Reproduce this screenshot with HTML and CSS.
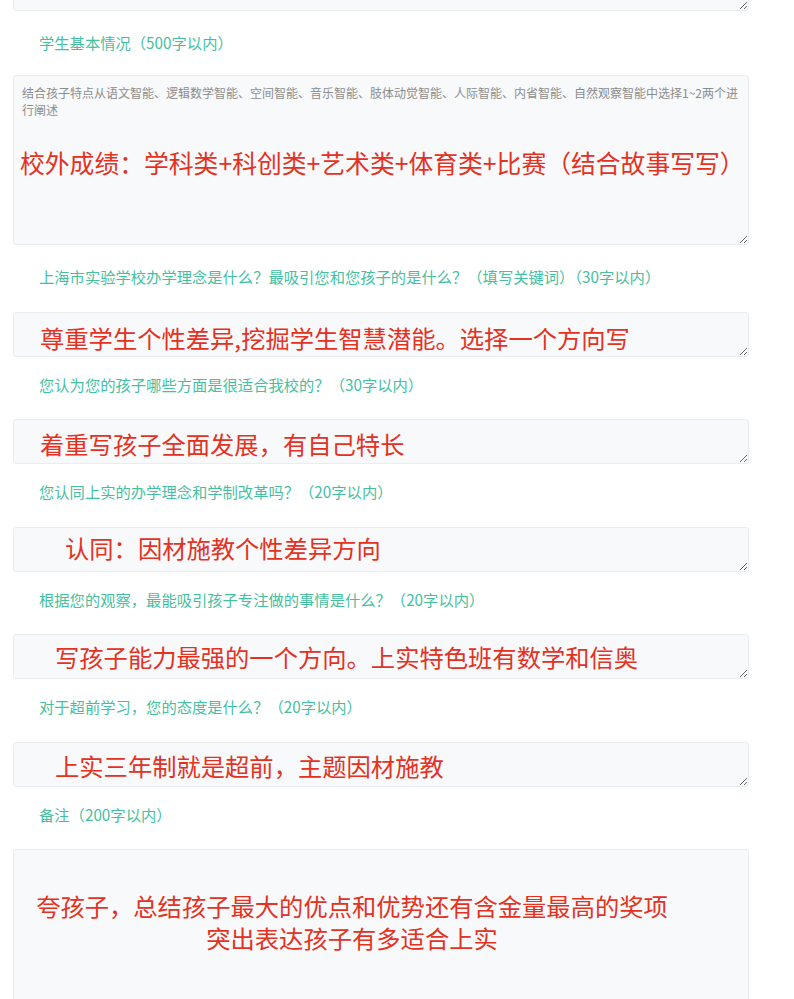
FILE: index.html
```html
<!DOCTYPE html>
<html lang="zh-CN">
<head>
<meta charset="utf-8">
<title>报名表</title>
<link rel="stylesheet" href="styles.css">
</head>
<body>
<div class="page">
  <div class="clip"><textarea class="box box-s" readonly></textarea></div>

  <div class="label">学生基本情况（500字以内）</div>
  <div class="field field-l">
    <textarea class="box box-l" readonly placeholder="结合孩子特点从语文智能、逻辑数学智能、空间智能、音乐智能、肢体动觉智能、人际智能、内省智能、自然观察智能中选择1~2两个进&#10;行阐述"></textarea>
    <div class="note n2">校外成绩：学科类+科创类+艺术类+体育类+比赛（结合故事写写）</div>
  </div>

  <div class="label">上海市实验学校办学理念是什么？最吸引您和您孩子的是什么？（填写关键词）（30字以内）</div>
  <div class="field">
    <textarea class="box box-s" readonly></textarea>
    <div class="note n3">尊重学生个性差异,挖掘学生智慧潜能。选择一个方向写</div>
  </div>

  <div class="label">您认为您的孩子哪些方面是很适合我校的？（30字以内）</div>
  <div class="field">
    <textarea class="box box-s" readonly></textarea>
    <div class="note n4">着重写孩子全面发展，有自己特长</div>
  </div>

  <div class="label">您认同上实的办学理念和学制改革吗？（20字以内）</div>
  <div class="field">
    <textarea class="box box-s" readonly></textarea>
    <div class="note n5">认同：因材施教个性差异方向</div>
  </div>

  <div class="label">根据您的观察，最能吸引孩子专注做的事情是什么？（20字以内）</div>
  <div class="field">
    <textarea class="box box-s" readonly></textarea>
    <div class="note n6">写孩子能力最强的一个方向。上实特色班有数学和信奥</div>
  </div>

  <div class="label">对于超前学习，您的态度是什么？（20字以内）</div>
  <div class="field">
    <textarea class="box box-s" readonly></textarea>
    <div class="note n7">上实三年制就是超前，主题因材施教</div>
  </div>

  <div class="label">备注（200字以内）</div>
  <div class="field field-l">
    <textarea class="box box-l" readonly></textarea>
    <div class="note n8">夸孩子，总结孩子最大的优点和优势还有含金量最高的奖项<br>突出表达孩子有多适合上实</div>
  </div>
</div>
</body>
</html>
```

FILE: styles.css
```css
html, body {
  margin: 0;
  padding: 0;
  background: #ffffff;
}

body {
  font-family: "Noto Sans CJK SC", "Noto Sans", sans-serif;
}

.page {
  display: flex;
  flex-direction: column;
  padding-bottom: 40px;
}

.clip {
  height: 11px;
  overflow: hidden;
  display: flex;
  align-items: flex-end;
}

.clip .box {
  margin-left: 13px;
  flex: none;
}

.field {
  position: relative;
  margin-left: 13px;
  width: 736px;
}

.box {
  display: block;
  box-sizing: border-box;
  width: 736px;
  margin: 0;
  border: 1px solid #e9edf0;
  border-radius: 3px;
  background: #f7f9fa;
  resize: vertical;
  outline: none;
  font-family: "Noto Sans CJK SC", "Noto Sans", sans-serif;
  font-size: 12px;
  line-height: 17px;
  color: #555;
  padding: 8px 4px 8px 8px;
}

.box::placeholder {
  color: #8c8c8c;
}

.box-s {
  height: 45px;
}

.box-l {
  height: 170px;
}

.label {
  margin: 21px 0 23px 39px;
  height: 20px;
  line-height: 20px;
  font-size: 15.3px;
  color: #45bfa0;
  white-space: nowrap;
}

.field + .label {
  margin-top: 17px;
  margin-bottom: 25.4px;
}

.field-l + .label {
  margin-top: 21px;
  margin-bottom: 26px;
}

.note {
  position: absolute;
  color: #e5311f;
  font-size: 24.3px;
  line-height: 32px;
  white-space: nowrap;
  pointer-events: none;
}

.n2 { left: 7px; top: 71px; font-size: 24.8px; }
.n3 { left: 27px; top: 10px; }
.n4 { left: 27px; top: 9px; }
.n5 { left: 52px; top: 5px; }
.n6 { left: 42px; top: 7px; }
.n7 { left: 42px; top: 8px; }
.n8 { left: 23px; top: 41px; width: 632px; text-align: center; }
```
